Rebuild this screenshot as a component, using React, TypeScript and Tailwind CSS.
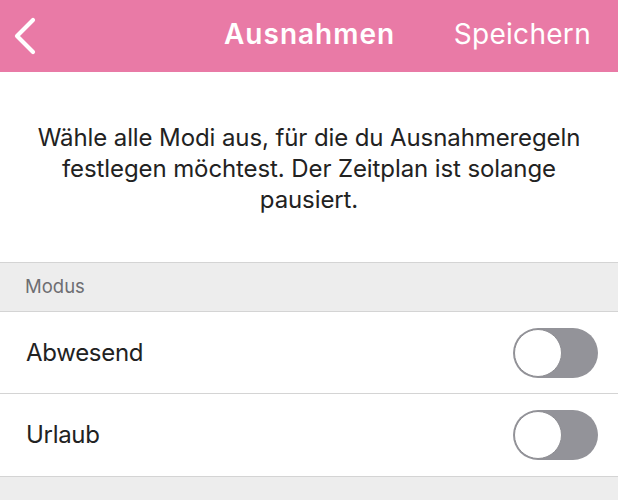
import React from "react";

function Toggle() {
  return (
    <div className="w-[85px] h-[50px] rounded-full bg-[#939399] p-[1px] flex items-center">
      <div className="w-[48px] h-[48px] rounded-full bg-white border-[1.5px] border-[#8e8e93]" />
    </div>
  );
}

export default function App() {
  return (
    <div className="w-[618px] h-[500px] overflow-hidden bg-[#ededed]" style={{ fontFamily: "Inter, 'Noto Sans', sans-serif" }}>
      <div className="h-[72px] bg-[#e97aa6] flex items-center text-white relative">
        <div className="w-[60px] pl-[13px] flex items-center">
          <svg width="24" height="38" viewBox="0 0 24 38" fill="none">
            <path d="M20 3 L4 19 L20 35" stroke="white" strokeWidth="4.2" strokeLinecap="round" strokeLinejoin="round" />
          </svg>
        </div>
        <div className="absolute left-[224px] top-[13px] text-[28px] leading-[42px] font-semibold tracking-[1px]">Ausnahmen</div>
        <div className="absolute right-[27px] top-[13px] text-[28px] leading-[42px] font-normal tracking-[0.3px]">Speichern</div>
      </div>
      <div className="bg-white h-[190px] pt-[50px] text-center text-[24px] leading-[31px] text-[#222] px-[20px] tracking-[-0.1px]">
        Wähle alle Modi aus, für die du Ausnahmeregeln festlegen möchtest. Der Zeitplan ist solange pausiert.
      </div>
      <div className="border-t border-[#d4d4d4] h-[49px] bg-[#ededed] flex items-center pl-[25px] text-[18.5px] text-[#6d6d72]">
        Modus
      </div>
      <div className="border-t border-[#d4d4d4] bg-white">
        <div className="h-[82px] flex items-center justify-between pl-[26px] pr-[20px] text-[24px] leading-[36px] tracking-[-0.3px] text-[#222] border-b border-[#d4d4d4]">
          <span>Abwesend</span>
          <Toggle />
        </div>
        <div className="h-[83px] flex items-center justify-between pl-[26px] pr-[20px] text-[24px] leading-[36px] tracking-[-0.3px] text-[#222] border-b border-[#d4d4d4]">
          <span>Urlaub</span>
          <Toggle />
        </div>
      </div>
    </div>
  );
}
